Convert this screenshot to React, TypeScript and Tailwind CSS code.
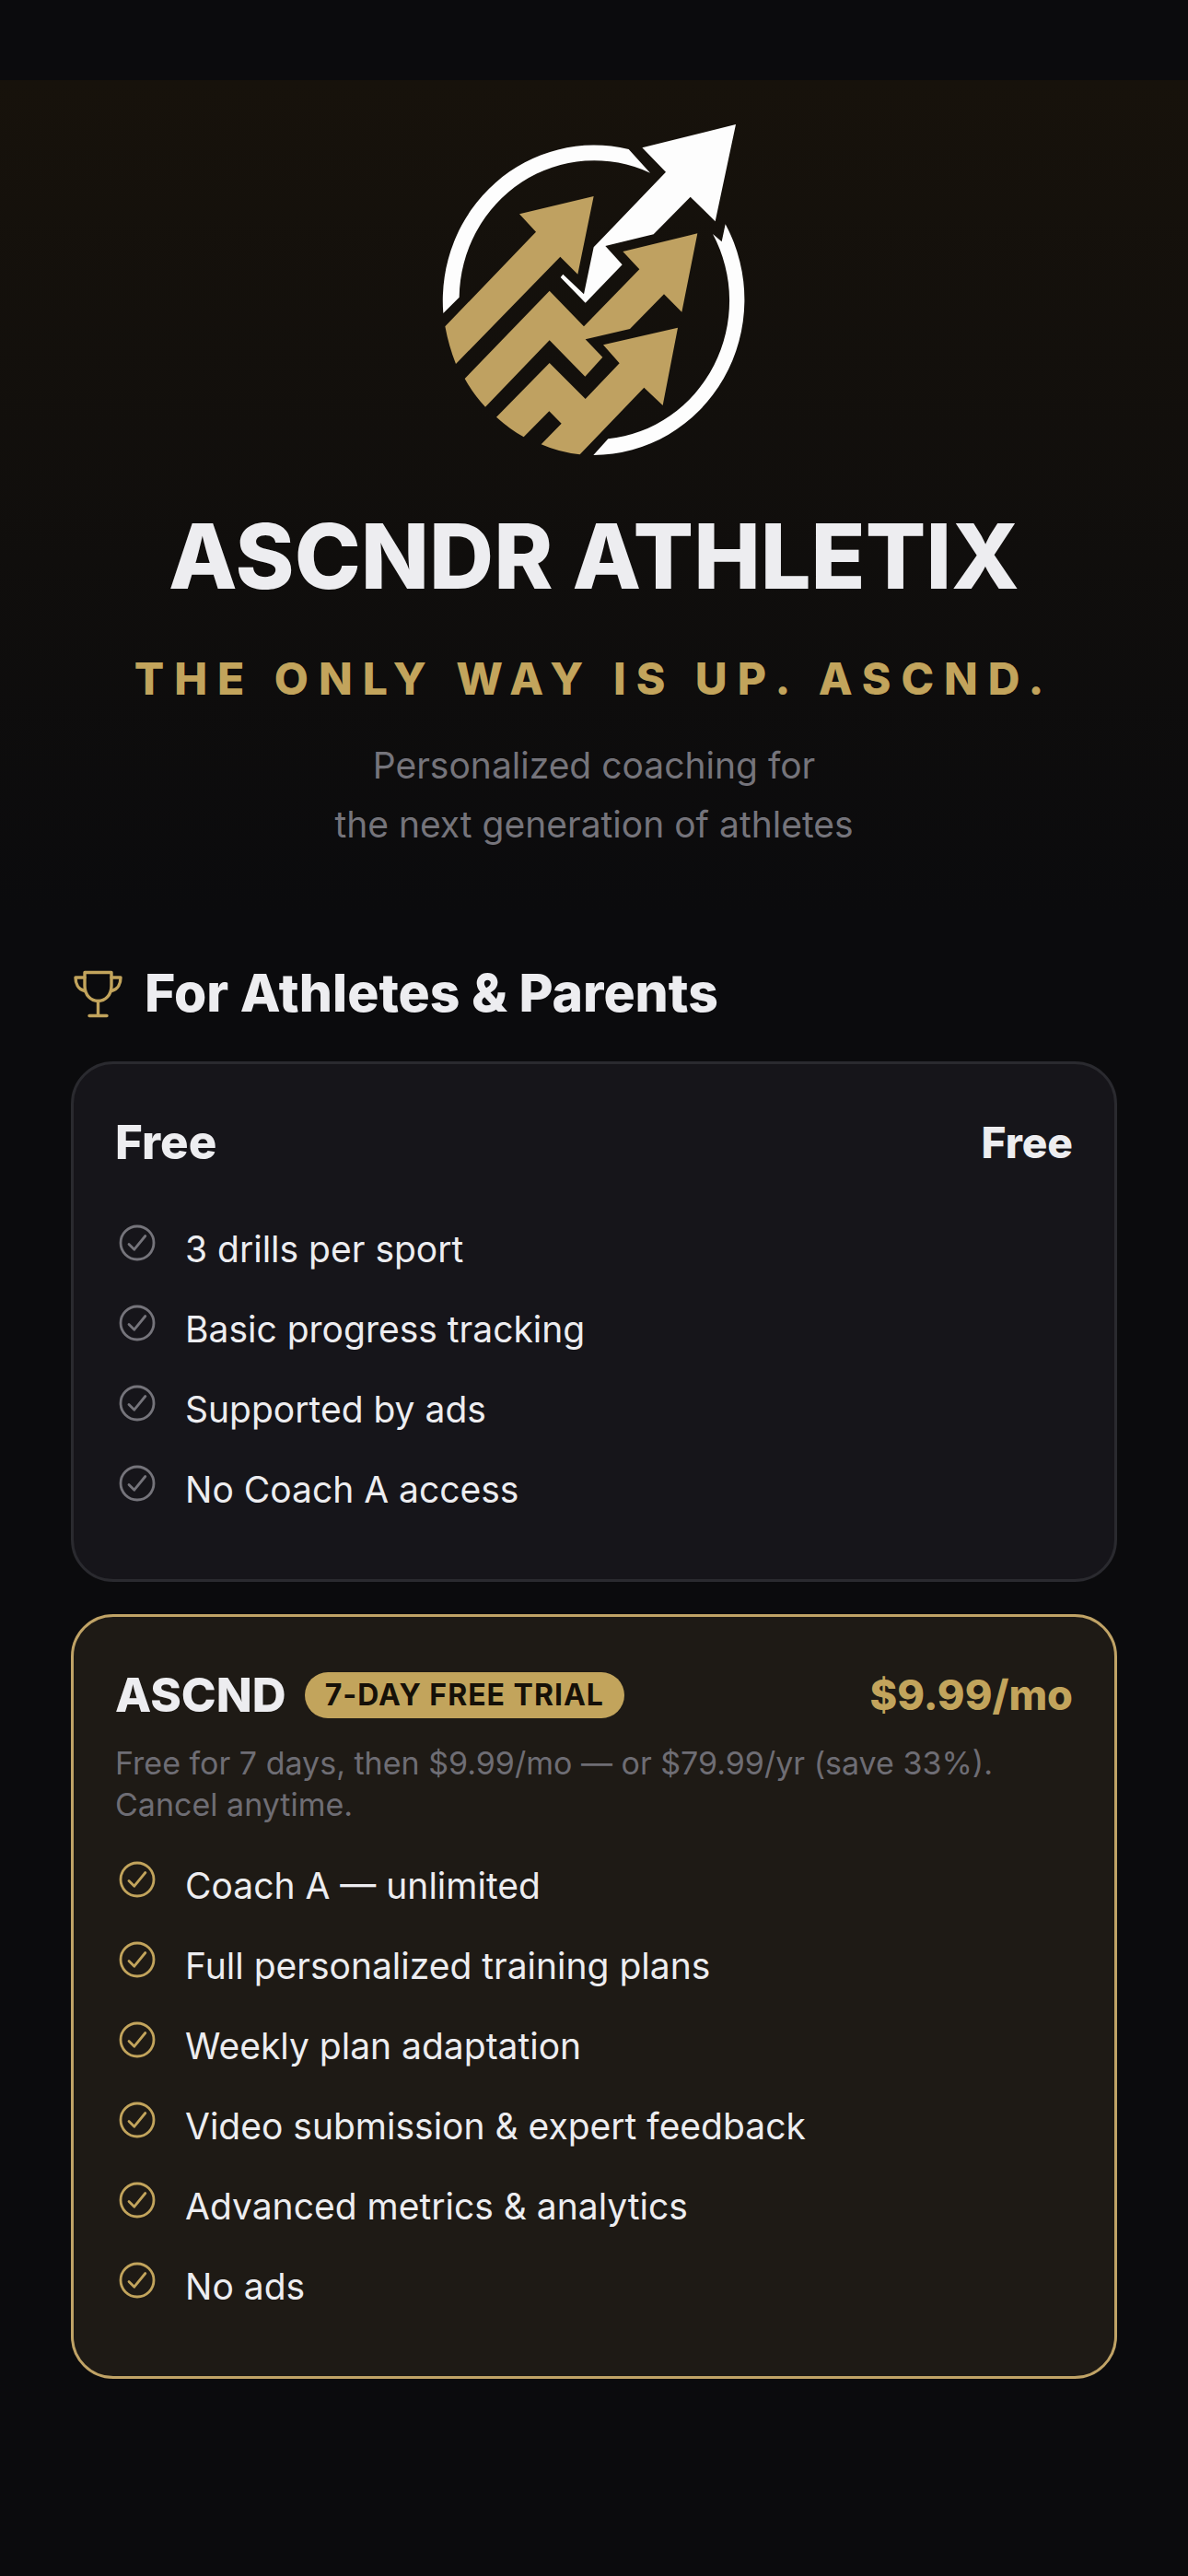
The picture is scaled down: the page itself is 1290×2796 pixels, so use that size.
import type { ReactNode } from "react";

function Logo() {
  return (
    <svg viewBox="0 0 1110 1170" className="h-[390px] w-[370px]" role="img" aria-label="ASCNDR ATHLETIX logo">
      <g fill="#fdfdfd">
        <path d="M64 660 A493 506 0 0 1 668 126 L738 203 A440 452 0 0 0 116 608 Z" />
        <path d="M983 370 A493 506 0 0 1 553 1122 L601 1069 A440 452 0 0 0 942 402 L971 427 Z" />
        <path d="M1017 45 L950 361 L869 281 L749 403 L592 441 L647 502 L527 626 L446 543 L454 533 L522 598 L554 445 L789 200 L712 121 Z" />
      </g>
      <g fill="#bfa161">
        <path d="M554 279 L502 533 L445 476 L105 825 Q82 768 70 703 L366 395 L312 337 Z" />
        <path d="M892 400 L841 656 L783 598 L672 711 L527 745 L583 803 L526 866 L410 748 L201 965 Q163 925 134 873 L410 587 L522 703 L703 517 L649 459 Z" />
        <path d="M828 707 L779 960 L718 902 L509 1120 Q442 1113 383 1087 L449 1019 L409 979 L326 1063 Q280 1037 237 998 L410 822 L527 939 L638 823 L585 763 Z" />
      </g>
    </svg>
  );
}

function TrophyIcon() {
  return (
    <svg
      viewBox="0 0 56 56"
      className="size-14 shrink-0 text-[#c2a45c]"
      fill="none"
      stroke="currentColor"
      strokeWidth="3.4"
      strokeLinecap="round"
      strokeLinejoin="round"
      aria-hidden="true"
    >
      <path d="M15 5.500 H44 V20 C44 30.500 37 36.500 29.500 36.500 C22 36.500 15 30.500 15 20 Z" />
      <path d="M15 11 H5 C5 17 7.500 24 15 25.500" />
      <path d="M44 11 H54 C54 17 51.500 24 44 25.500" />
      <path d="M29.500 36.500 V52.500 M20 52.500 H39" />
    </svg>
  );
}

function CheckIcon({ className }: { className: string }) {
  return (
    <svg
      viewBox="0 0 48 48"
      className={`size-12 shrink-0 ${className}`}
      fill="none"
      stroke="currentColor"
      strokeWidth="2.8"
      strokeLinecap="round"
      strokeLinejoin="round"
      aria-hidden="true"
    >
      <circle cx="24" cy="24" r="18" />
      <path d="M15 25.500 L20.800 31.200 L32.800 16.500" />
    </svg>
  );
}

function FeatureList({ items, iconClass }: { items: string[]; iconClass: string }) {
  return (
    <ul className="flex flex-col gap-8">
      {items.map((item) => (
        <li key={item} className="flex items-start gap-7">
          <CheckIcon className={iconClass} />
          <span className="pt-[7px] text-[39px] leading-[48px]">{item}</span>
        </li>
      ))}
    </ul>
  );
}

function PlanCard({ className, children }: { className: string; children: ReactNode }) {
  return (
    <article className={`rounded-[46px] border-3 px-[45px] pt-[53px] pb-[73px] ${className}`}>{children}</article>
  );
}

const freeFeatures = ["3 drills per sport", "Basic progress tracking", "Supported by ads", "No Coach A access"];

const ascndFeatures = [
  "Coach A — unlimited",
  "Full personalized training plans",
  "Weekly plan adaptation",
  "Video submission & expert feedback",
  "Advanced metrics & analytics",
  "No ads",
];

export default function App() {
  return (
    <div className="min-h-screen bg-[#0b0b0d] pt-[87px] pb-20 font-['Inter',sans-serif] text-[#ededf0]">
      <header className="flex flex-col items-center bg-linear-to-b from-[#17120b] to-[#0b0b0d] px-8 pt-[33px] pb-[60px] text-center">
        <Logo />
        <h1 className="mt-[44px] text-[97px] leading-[100px] font-extrabold">ASCNDR ATHLETIX</h1>
        <p className="mt-[53px] text-[48px] leading-[60px] font-extrabold tracking-[11px] text-[#c2a45c]">
          THE ONLY WAY IS UP. ASCND.
        </p>
        <p className="mt-8 text-[39px] leading-[64px] text-[#75747b]">
          Personalized coaching for
          <br />
          the next generation of athletes
        </p>
      </header>

      <main className="px-[77px] pt-[55px]">
        <div className="flex items-center gap-6">
          <TrophyIcon />
          <h2 className="text-[57px] leading-[72px] font-extrabold">For Athletes &amp; Parents</h2>
        </div>

        <div className="mt-[38px] flex flex-col gap-[35px]">
          <PlanCard className="border-[#2a2a2f] bg-[#16151a]">
            <div className="mb-[53px] flex items-center justify-between leading-[64px] font-extrabold">
              <h3 className="text-[51px]">Free</h3>
              <span className="text-[46px]">Free</span>
            </div>
            <FeatureList items={freeFeatures} iconClass="text-[#75747b]" />
          </PlanCard>

          <PlanCard className="border-[#c0a366] bg-[#1e1a15]">
            <div className="flex items-center justify-between leading-[64px] font-extrabold">
              <div className="flex items-center gap-5">
                <h3 className="text-[51px]">ASCND</h3>
                <span className="rounded-full bg-[#c2a45c] px-[22px] text-[32px] leading-[50px] font-bold tracking-[1px] text-[#151008]">
                  7-DAY FREE TRIAL
                </span>
              </div>
              <span className="text-[45px] text-[#c2a45c]">$9.99/mo</span>
            </div>
            <p className="mt-[19px] mb-[35px] text-[34px] leading-[45px] text-[#6e6d74]">
              Free for 7 days, then $9.99/mo — or $79.99/yr (save 33%). Cancel anytime.
            </p>
            <FeatureList items={ascndFeatures} iconClass="text-[#c2a45c]" />
          </PlanCard>
        </div>
      </main>
    </div>
  );
}
